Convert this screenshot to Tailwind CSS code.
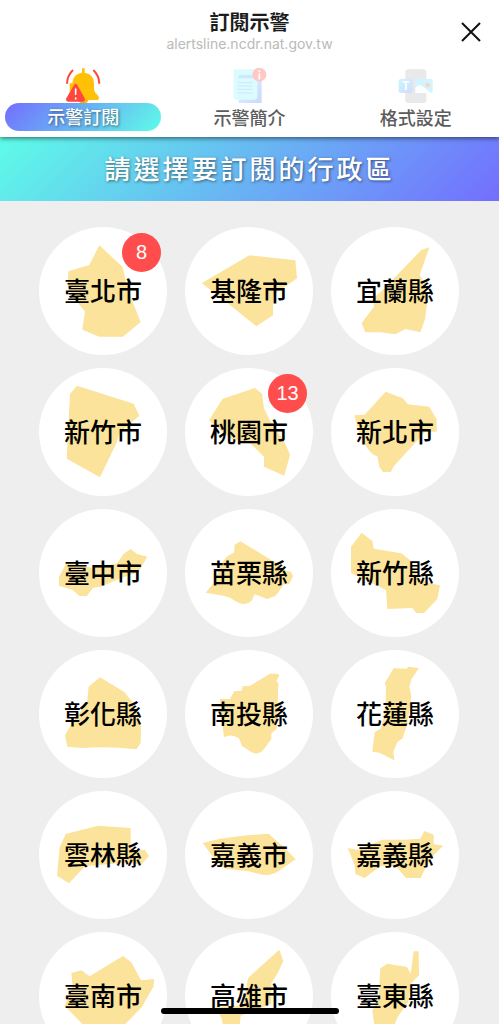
<!DOCTYPE html>
<html lang="zh-Hant">
  <head>
    <meta charset="UTF-8" />
    <meta name="viewport" content="width=device-width, initial-scale=1.0" />
    <script src="https://cdn.jsdelivr.net/npm/@tailwindcss/browser@4"></script>
    <title>訂閱示警</title>
  </head>
  <body class="relative flex h-screen flex-col overflow-hidden bg-[#eeeeee] font-['Noto_Sans_CJK_TC',sans-serif]">
    <header class="relative z-10 bg-white pt-[10px] shadow-[0_1px_5px_rgba(0,0,0,0.6)]">
      <div class="text-center">
        <h1 class="text-[20px] leading-6 font-bold text-[#1c1c1e]">訂閱示警</h1>
        <p class="font-[Inter,sans-serif] text-[14px] leading-5 text-[#bababa]">alertsline.ncdr.nat.gov.tw</p>
      </div>
      <button type="button" aria-label="關閉" class="absolute top-[22px] right-[18px]">
        <svg class="size-5" viewBox="0 0 20 20" fill="none" stroke="#111" stroke-width="2">
          <path d="M1 1 19 19M19 1 1 19" />
        </svg>
      </button>
      <nav class="grid grid-cols-3 pt-[13px] pb-[6px] text-center text-[18px] leading-7 font-medium text-[#5c5c5c]">
        <a href="#subscribe" class="flex flex-col items-center px-[5px]">
          <svg class="size-9" viewBox="195 201 108 108" fill="none">
            <path d="M246 207q0-3 4-3t4 3v11q28 4 28 32v18q0 9 11 18 4 4 4 8 0 6-6 6H215q-6 0-6-6V250h8q1-28 29-32z" fill="#ffc107" />
            <path d="M235 299h30q-2 12-15 12t-15-12z" fill="#ffb300" />
            <path d="M219 210q-17 16-18 41M280 210q17 16 18 41" stroke="#ff473e" stroke-width="6" />
            <path d="M222 255q5-8 10 0l22 40q3 10-6 10h-43q-9 0-6-10z" fill="#ff473e" />
            <path d="M227 267v16M227 294v3" stroke="#fff" stroke-width="5" stroke-linecap="round" />
          </svg>
          <span class="block w-full rounded-full bg-[linear-gradient(135deg,#736efe,#5efce8)] text-white [text-shadow:1px_1px_3px_rgba(0,0,0,0.5)]"><span class="block pb-[2px] leading-[26px]">示警訂閱</span></span>
        </a>
        <a href="#intro" class="flex flex-col items-center px-[5px]">
          <svg class="size-9 opacity-30" viewBox="34 21 108 108" fill="none">
            <defs>
              <linearGradient id="page" x1="0" y1="0" x2="1" y2="1">
                <stop offset="0" stop-color="#7cf3ff" />
                <stop offset="1" stop-color="#5f7cf5" />
              </linearGradient>
            </defs>
            <path d="M57 40h63q6 0 6 6v80q0 6-6 6H63q-6 0-6-6z" fill="url(#page)" />
            <path d="M47 28h60q6 0 6 6v76q0 9-9 9H50q-8 0-8-8V33q0-5 5-5z" fill="#8df4ff" />
            <path d="M57 50h42" stroke="#55b4fa" stroke-width="9" />
            <path d="M55 68h44M55 78h44M55 88h44M55 99h44" stroke="#55b4fa" stroke-width="3" />
            <circle cx="119" cy="44" r="21" fill="#ff4b3e" />
            <path d="M119 42v14" stroke="#fff" stroke-width="5" stroke-linecap="round" />
            <circle cx="119" cy="34" r="3" fill="#fff" />
          </svg>
          <span class="block w-full">示警簡介</span>
        </a>
        <a href="#format" class="flex flex-col items-center px-[5px]">
          <svg class="size-9 opacity-30" viewBox="38 21 108 108" fill="none">
            <defs>
              <linearGradient id="tile" x1="0" y1="0" x2="1" y2="1">
                <stop offset="0" stop-color="#55e1ff" />
                <stop offset="1" stop-color="#6b8cff" />
              </linearGradient>
            </defs>
            <rect x="60" y="28" width="63" height="101" rx="9" fill="#b9b9b9" />
            <rect x="40" y="57" width="42" height="42" rx="6" fill="url(#tile)" />
            <text x="61" y="90" text-anchor="middle" font-family="Inter, sans-serif" font-size="34" font-weight="700" fill="#fff">T</text>
            <rect x="90" y="57" width="52" height="42" rx="6" fill="#6cdcff" />
            <path d="M90 83q13-16 27 0l20 16H90z" fill="#fff" />
            <circle cx="127" cy="75" r="7" fill="#ff6c45" />
          </svg>
          <span class="block w-full">格式設定</span>
        </a>
      </nav>
    </header>

    <h2 class="bg-[linear-gradient(135deg,#5efce8,#736efe)] pb-[2px] text-center text-[26px] leading-[62px] font-medium tracking-[3px] text-white [text-shadow:1px_1px_3px_rgba(0,0,0,0.5)]">請選擇要訂閱的行政區</h2>

    <main class="grid min-h-0 flex-1 auto-rows-max grid-cols-[repeat(3,128px)] justify-center gap-x-[18px] gap-y-[13px] overflow-hidden pt-[26px] pr-px text-[26px] font-medium text-black">
      <button type="button" class="relative grid size-32 place-items-center rounded-full bg-white">
        <svg class="col-start-1 row-start-1 size-32" viewBox="27 21 384 384" fill="#fce39b"><path d="M208 76 278 141 288 185 308 245 332 306 279 350H208L157 329 165 274 140 245 113 200 115 154 178 135z" /></svg>
        <span class="col-start-1 row-start-1 pb-1">臺北市</span>
        <span class="absolute top-[6px] right-[6px] size-[39px] rounded-full bg-[#ff4d4d] font-['Liberation_Sans',sans-serif] text-[20px] leading-[39px] font-normal text-white">8</span>
      </button>
      <button type="button" class="grid size-32 place-items-center rounded-full bg-white">
        <svg class="col-start-1 row-start-1 size-32" viewBox="465 21 384 384" fill="#fce39b"><path d="M515 190 658 106 796 121 801 175 729 226V286L679 319 580 239z" /></svg>
        <span class="col-start-1 row-start-1 pb-1">基隆市</span>
      </button>
      <button type="button" class="grid size-32 place-items-center rounded-full bg-white">
        <svg class="col-start-1 row-start-1 size-32" viewBox="18 21 384 384" fill="#fce39b"><path d="M289 90 313 82 284 165 300 190 307 245 300 298 286 337 241 327 211 343 166 337H121L110 309 147 260 145 235 170 213z" /></svg>
        <span class="col-start-1 row-start-1 pb-1">宜蘭縣</span>
      </button>

      <button type="button" class="grid size-32 place-items-center rounded-full bg-white">
        <svg class="col-start-1 row-start-1 size-32" viewBox="27 24 384 384" fill="#fce39b"><path d="M141 77 311 131 328 168 270 215 259 250 210 352 110 296 120 102z" /></svg>
        <span class="col-start-1 row-start-1 pb-1">新竹市</span>
      </button>
      <button type="button" class="relative grid size-32 place-items-center rounded-full bg-white">
        <svg class="col-start-1 row-start-1 size-32" viewBox="465 24 384 384" fill="#fce39b"><path d="M578 116 675 84 696 101 702 145 720 182 765 249 780 284 763 347 702 320V290L663 252 600 235 537 181z" /></svg>
        <span class="col-start-1 row-start-1 pb-1">桃園市</span>
        <span class="absolute top-[6px] right-[6px] size-[39px] rounded-full bg-[#ff4d4d] font-['Liberation_Sans',sans-serif] text-[20px] leading-[39px] font-normal text-white">13</span>
      </button>
      <button type="button" class="grid size-32 place-items-center rounded-full bg-white">
        <svg class="col-start-1 row-start-1 size-32" viewBox="18 444 384 384" fill="#fce39b"><path d="M119 584 182 515 232 534 249 553 313 560 335 598V635L300 636 205 740 198 756H174L163 740 157 709Q137 705 117 668L102 640 88 586z" /></svg>
        <span class="col-start-1 row-start-1 pb-1">新北市</span>
      </button>

      <button type="button" class="grid size-32 place-items-center rounded-full bg-white">
        <svg class="col-start-1 row-start-1 size-32" viewBox="27 27 384 384" fill="#fce39b"><path d="M87 231 109 190 185 203 262 190 281 161 302 147 321 162 352 170 325 217 275 233 212 260 190 263 170 288H149L128 270 87 257z" /></svg>
        <span class="col-start-1 row-start-1 pb-1">臺中市</span>
      </button>
      <button type="button" class="grid size-32 place-items-center rounded-full bg-white">
        <svg class="col-start-1 row-start-1 size-32" viewBox="465 27 384 384" fill="#fce39b"><path d="M613 135 631 124 744 192 769 213 783 215 789 229 777 253H762L737 287 711 297 674 283 665 302Q645 320 621 306L600 293 580 287 527 278 550 250 575 190 590 170 613 157z" /></svg>
        <span class="col-start-1 row-start-1 pb-1">苗栗縣</span>
      </button>
      <button type="button" class="grid size-32 place-items-center rounded-full bg-white">
        <svg class="col-start-1 row-start-1 size-32" viewBox="903 27 384 384" fill="#fce39b"><path d="M995 98 1027 123 1031 146 1114 160 1140 181 1165 235 1200 250 1230 256 1222 297 1182 339H1159L1147 324 1072 327 1068 270 963 219V140z" /></svg>
        <span class="col-start-1 row-start-1 pb-1">新竹縣</span>
      </button>

      <button type="button" class="grid size-32 place-items-center rounded-full bg-white">
        <svg class="col-start-1 row-start-1 size-32" viewBox="27 24 384 384" fill="#fce39b"><path d="M210 106 283 150 305 178 333 245 332 303 319 322Q230 312 157 318L112 314 105 279 125 245 171 182 176 134z" /></svg>
        <span class="col-start-1 row-start-1 pb-1">彰化縣</span>
      </button>
      <button type="button" class="grid size-32 place-items-center rounded-full bg-white">
        <svg class="col-start-1 row-start-1 size-32" viewBox="465 24 384 384" fill="#fce39b"><path d="M720 95H744L748 101 739 117 745 124 743 185 740 262 724 274V291L707 314Q691 341 668 332L636 312 627 289Q604 274 582 286L577 245 570 171H600L613 147H634L638 133 659 132z" /></svg>
        <span class="col-start-1 row-start-1 pb-1">南投縣</span>
      </button>
      <button type="button" class="grid size-32 place-items-center rounded-full bg-white">
        <svg class="col-start-1 row-start-1 size-32" viewBox="903 24 384 384" fill="#fce39b"><path d="M1091 79 1131 80 1134 74 1167 78 1145 110 1138 135 1144 162 1132 245 1118 289 1102 300 1090 329 1093 355 1048 332 1027 329 1034 270 1052 260 1060 230 1067 180 1068 132 1064 124z" /></svg>
        <span class="col-start-1 row-start-1 pb-1">花蓮縣</span>
      </button>

      <button type="button" class="grid size-32 place-items-center rounded-full bg-white">
        <svg class="col-start-1 row-start-1 size-32" viewBox="27 21 384 384" fill="#fce39b"><path d="M107 150 204 125 302 132V188L317 199 344 197 357 216 332 243 300 235 165 247 117 298 81 275 89 190z" /></svg>
        <span class="col-start-1 row-start-1 pb-1">雲林縣</span>
      </button>
      <button type="button" class="grid size-32 place-items-center rounded-full bg-white">
        <svg class="col-start-1 row-start-1 size-32" viewBox="465 21 384 384" fill="#fce39b"><path d="M518 177 570 164 650 154 716 149 760 188 797 226 745 262Q720 279 687 270L656 262 590 255 565 240z" /></svg>
        <span class="col-start-1 row-start-1 pb-1">嘉義市</span>
      </button>
      <button type="button" class="grid size-32 place-items-center rounded-full bg-white">
        <svg class="col-start-1 row-start-1 size-32" viewBox="903 21 384 384" fill="#fce39b"><path d="M953 192 985 198 1056 167H1127L1171 164 1183 141 1211 152V180L1240 185 1212 212 1192 240 1172 282H1128L1095 244 1050 247 1004 282 976 270 974 243z" /></svg>
        <span class="col-start-1 row-start-1 pb-1">嘉義縣</span>
      </button>

      <button type="button" class="grid size-32 place-items-center rounded-full bg-white">
        <svg class="col-start-1 row-start-1 size-32" viewBox="27 24 384 384" fill="#fce39b"><path d="M124 147 154 139 179 157 279 96 304 115 333 169 372 165 371 187 335 250 284 302 230 345 160 303 104 245 128 190z" /></svg>
        <span class="col-start-1 row-start-1 pb-1">臺南市</span>
      </button>
      <button type="button" class="grid size-32 place-items-center rounded-full bg-white">
        <svg class="col-start-1 row-start-1 size-32" viewBox="465 24 384 384" fill="#fce39b"><path d="M748 77 760 111 743 148 724 178V240L632 275 627 330H585L575 285 558 249 640 244 654 162z" /></svg>
        <span class="col-start-1 row-start-1 pb-1">高雄市</span>
      </button>
      <button type="button" class="grid size-32 place-items-center rounded-full bg-white">
        <svg class="col-start-1 row-start-1 size-32" viewBox="903 24 384 384" fill="#fce39b"><path d="M1051 133 1072 119 1131 129 1142 149 1151 82H1166L1167 154 1142 179 1135 235 1105 275 1093 302 1060 345 1033 303 1027 260 1045 220z" /></svg>
        <span class="col-start-1 row-start-1 pb-1">臺東縣</span>
      </button>
    </main>

    <!-- home indicator -->
    <div class="absolute bottom-[10px] left-1/2 z-20 h-[6px] w-[178px] -translate-x-1/2 rounded-full bg-black"></div>
  </body>
</html>
